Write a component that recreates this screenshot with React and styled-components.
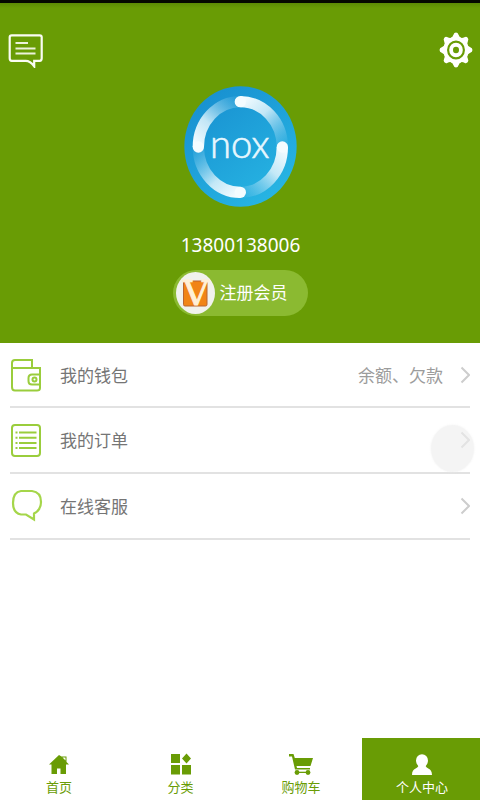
import React from 'react'
import styled, { createGlobalStyle } from 'styled-components'

const GlobalStyle = createGlobalStyle`
    * {
        box-sizing: border-box;
    }
    body {
        margin: 0;
        background: #fff;
        font-family: "Noto Sans", "Noto Sans CJK SC", sans-serif;
    }
    svg {
        display: block;
        flex-shrink: 0;
    }
`

const Page = styled.div`
    display: flex;
    flex-direction: column;
    width: 480px;
    height: 800px;
    overflow: hidden;
`

const Header = styled.header`
    height: 343px;
    border-top: 3px solid #050900;
    background: linear-gradient(#5b8b04, #699c05 5px);
    color: #fff;
`

const Toolbar = styled.div`
    display: flex;
    justify-content: space-between;
    padding: 29px 7px 0 8px;
    height: 83px;
`

const Profile = styled.div`
    display: flex;
    flex-direction: column;
    align-items: center;
`

const Phone = styled.div`
    margin-top: 24px;
    padding-left: 1px;
    font-size: 19px;
    line-height: 28px;
`

const Badge = styled.div`
    display: flex;
    align-items: center;
    width: 135px;
    height: 46px;
    margin-top: 11px;
    padding-left: 3px;
    border-radius: 23px;
    background: #8bba31;
    font-family: "Noto Sans CJK SC", sans-serif;
    font-size: 17px;
    svg {
        margin-right: 5px;
    }
    span {
        padding-bottom: 3px;
    }
`

const Menu = styled.main`
    position: relative;
    flex: 1;
    padding: 0 10px;
`

const MenuItem = styled.div`
    display: flex;
    align-items: center;
    height: ${props => props.$height || 66}px;
    border-bottom: 2px solid #e2e2e2;
    font-family: "Noto Sans CJK SC", sans-serif;
    font-size: 17px;
    color: #757575;
`

const Label = styled.span`
    flex: 1;
    margin-left: 17px;
    padding-bottom: 1px;
`

const Hint = styled.span`
    margin-right: 17px;
    color: #9c9c9c;
`

const TouchDot = styled.div`
    position: absolute;
    top: 82px;
    left: 431px;
    width: 43px;
    height: 47px;
    border-radius: 50%;
    background: rgba(238, 238, 238, .65);
    box-shadow: 0 0 2px rgba(236, 236, 236, .8);
`

const TabBar = styled.nav`
    display: grid;
    grid-template-columns: 118px 124px 120px 118px;
    height: 62px;
`

const Tab = styled.div`
    display: flex;
    flex-direction: column;
    align-items: center;
    padding-top: 15px;
    padding-left: ${props => props.$shift > 0 ? props.$shift : 0}px;
    padding-right: ${props => props.$shift < 0 ? -props.$shift : 0}px;
    font-family: "Noto Sans CJK SC", sans-serif;
    font-size: 13px;
    line-height: 19px;
    color: ${props => props.$active ? '#fff' : '#699c05'};
    background: ${props => props.$active ? '#699c05' : '#fff'};
    svg {
        margin-bottom: 1px;
    }
`

const MessageIcon = () => (
    <svg width='36' height='36' viewBox='0 0 36 36' fill='none' stroke='#fafcf3' strokeWidth='2.2'>
        <path d='M4 3H32Q34 3 34 5V26Q34 28.5 32 28.5H26.5V34Q22.5 28.5 18 28.5H4Q2 28.5 2 26V5Q2 3 4 3Z' transform='translate(-.3 .3)' />
        <path d='M7.5 11H20M7.5 16.5H27.5M7.5 21.5H27.5' strokeOpacity='.9' />
    </svg>
)

const GearIcon = () => (
    <svg width='34' height='36' viewBox='0 0 34 36'>
        <g fill='#fff' transform='translate(17 18) scale(.94 1)'>
            {[0, 45, 90, 135, 180, 225, 270, 315].map(deg => (
                <path key={deg} d='M-6 -11.5Q-3.4 -13 -2.7 -15.2Q-2 -17.5 0 -17.5Q2 -17.5 2.7 -15.2Q3.4 -13 6 -11.5Z' transform={`rotate(${deg})`} />
            ))}
            <circle r='13.4' />
            <circle r='8.4' fill='none' stroke='#699c05' strokeWidth='2.3' />
            <circle r='3.2' fill='#699c05' />
        </g>
    </svg>
)

const ringParts = [
    { id: 'top', d: 'M213 79A126 136 0 0 1 339 215', head: [213, 79], to: [339, 215] },
    { id: 'right', d: 'M339 215A126 136 0 0 1 213 351', head: [339, 215], to: [213, 351] },
    { id: 'bottom', d: 'M213 351A126 136 0 0 1 87 215', head: [213, 351], to: [87, 215] },
    { id: 'left', d: 'M87 215A126 136 0 0 1 213 79', head: [87, 215], to: [213, 79] },
]

const Avatar = () => (
    <svg width='113' height='121' viewBox='44 32 339 363'>
        <defs>
            <linearGradient id='sky' x1='0' y1='0' x2='.7' y2='1'>
                <stop offset='0' stopColor='#168bce' />
                <stop offset='1' stopColor='#27b5e3' />
            </linearGradient>
            {ringParts.map(({ id, head, to }) => (
                <linearGradient key={id} id={id} gradientUnits='userSpaceOnUse' x1={head[0]} y1={head[1]} x2={to[0]} y2={to[1]}>
                    <stop offset='0' stopColor='#f4fcff' />
                    <stop offset='.4' stopColor='#d5effa' stopOpacity='.9' />
                    <stop offset='1' stopColor='#7ccbee' stopOpacity='.15' />
                </linearGradient>
            ))}
        </defs>
        <ellipse cx='213.5' cy='213.5' rx='168.5' ry='181' fill='url(#sky)' />
        {ringParts.map(({ id, d }) => <path key={id} d={d} fill='none' stroke={`url(#${id})`} strokeWidth='34' />)}
        {ringParts.map(({ id, head }) => <circle key={id} cx={head[0]} cy={head[1]} r='17' fill='#f4fcff' />)}
        <text x='122' y='247' fontFamily='Lato, sans-serif' fontSize='120' fontWeight='300' fill='#e6f7fe' stroke='#e6f7fe' strokeWidth='2' textLength='178' lengthAdjust='spacingAndGlyphs'>nox</text>
    </svg>
)

const MemberIcon = () => (
    <svg width='39' height='42' viewBox='0 0 39 42'>
        <ellipse cx='19.5' cy='21' rx='19.5' ry='21' fill='#f1f2ed' />
        <rect x='7.5' y='9' width='23.5' height='25' rx='1.5' fill='#f18416' stroke='#b96531' />
        <text x='7' y='33' fontFamily='DejaVu Serif, serif' fontSize='33' fill='#fff0d7' stroke='#fff0d7' strokeWidth='.8' textLength='26' lengthAdjust='spacingAndGlyphs'>V</text>
    </svg>
)

const WalletIcon = () => (
    <svg width='33' height='34' viewBox='0 0 33 34' fill='none' stroke='#9acd3c' strokeWidth='2'>
        <path d='M2 10V5Q2 2 5 2H22V10M2 10H30V30Q30 32.5 27 32.5H5Q2 32.5 2 29V9M30 16.5H22Q18.5 16.5 18.5 20V23Q18.5 26.5 22 26.5H30' />
        <circle cx='24.5' cy='21.5' r='2' />
    </svg>
)

const OrderIcon = () => (
    <svg width='33' height='34' viewBox='0 0 33 34' fill='none' stroke='#9acd3c' strokeWidth='2'>
        <rect x='2' y='2' width='28' height='31' rx='3' />
        <path d='M5.5 9.5H7.5M9 9.5H26.5M5.5 14.8H7.5M9 14.8H26.5M5.5 20H7.5M9 20H26.5M5.5 25H7.5M9 25H26.5' />
    </svg>
)

const ServiceIcon = () => (
    <svg width='33' height='34' viewBox='0 0 33 34' fill='none' stroke='#a5d64a' strokeWidth='2.2'>
        <path d='M11 2H22Q31 3 31 13Q31 21 24 24.5V30.5L16 25.5H11Q3 24 3 14Q3 3 11 2Z' />
    </svg>
)

const Chevron = () => (
    <svg width='10' height='18' viewBox='0 0 10 18' fill='none' stroke='#cdcdcd' strokeWidth='2'>
        <path d='M1.5 1.5L9 9L1.5 16.5' />
    </svg>
)

const HomeIcon = () => (
    <svg width='20' height='23' viewBox='0 0 20 23' fill='#699c05'>
        <path d='M10 2L0 11.5H2.5V21H8V15.5H11.5V21H17V11.5H20L17.5 9V3.5H12.5Z' />
        <path d='M13.5 4.5H16.5V7.5Z' fill='#fff' />
    </svg>
)

const CategoryIcon = () => (
    <svg width='22' height='23' viewBox='0 0 22 23' fill='#699c05'>
        <path d='M1 1H10V10H1ZM1 12H10V21.5H1ZM12 12H21V21.5H12ZM16.5 .5L21 5.5L16.5 10.5L12 5.5Z' />
    </svg>
)

const CartIcon = () => (
    <svg width='24' height='23' viewBox='0 0 24 23' fill='#699c05'>
        <path d='M0 1H4.5L5.8 5H24L21.5 13H7.5L8 15H21V16.5H6L3 3.5H0Z' />
        <circle cx='8' cy='19.5' r='2.4' />
        <circle cx='19' cy='19.5' r='2.4' />
        <path d='M8 18.7H19V20H8Z' />
    </svg>
)

const UserIcon = () => (
    <svg width='20' height='23' viewBox='0 0 20 23' fill='#fff'>
        <ellipse cx='10' cy='7.6' rx='6' ry='6.4' />
        <path d='M6.5 12C6.5 16 0 14.5 0 22H20C20 14.5 13.5 16 13.5 12Z' />
    </svg>
)

const menuItems = [
    { label: '我的钱包', hint: '余额、欠款', Icon: WalletIcon, height: 65 },
    { label: '我的订单', Icon: OrderIcon },
    { label: '在线客服', Icon: ServiceIcon },
]

const tabs = [
    { label: '首页', Icon: HomeIcon },
    { label: '分类', Icon: CategoryIcon, shift: 1 },
    { label: '购物车', Icon: CartIcon, shift: -2 },
    { label: '个人中心', Icon: UserIcon, shift: 2, active: true },
]

const App = () => {
    return (
        <Page>
            <GlobalStyle />
            <Header>
                <Toolbar>
                    <MessageIcon />
                    <GearIcon />
                </Toolbar>
                <Profile>
                    <Avatar />
                    <Phone>13800138006</Phone>
                    <Badge>
                        <MemberIcon />
                        <span>注册会员</span>
                    </Badge>
                </Profile>
            </Header>
            <Menu>
                {menuItems.map(({ label, hint, Icon, height }) => (
                    <MenuItem key={label} $height={height}>
                        <Icon />
                        <Label>{label}</Label>
                        {hint && <Hint>{hint}</Hint>}
                        <Chevron />
                    </MenuItem>
                ))}
                <TouchDot />
            </Menu>
            <TabBar>
                {tabs.map(({ label, Icon, shift, active }) => (
                    <Tab key={label} $shift={shift} $active={active}>
                        <Icon />
                        {label}
                    </Tab>
                ))}
            </TabBar>
        </Page>
    )
}

export default App
